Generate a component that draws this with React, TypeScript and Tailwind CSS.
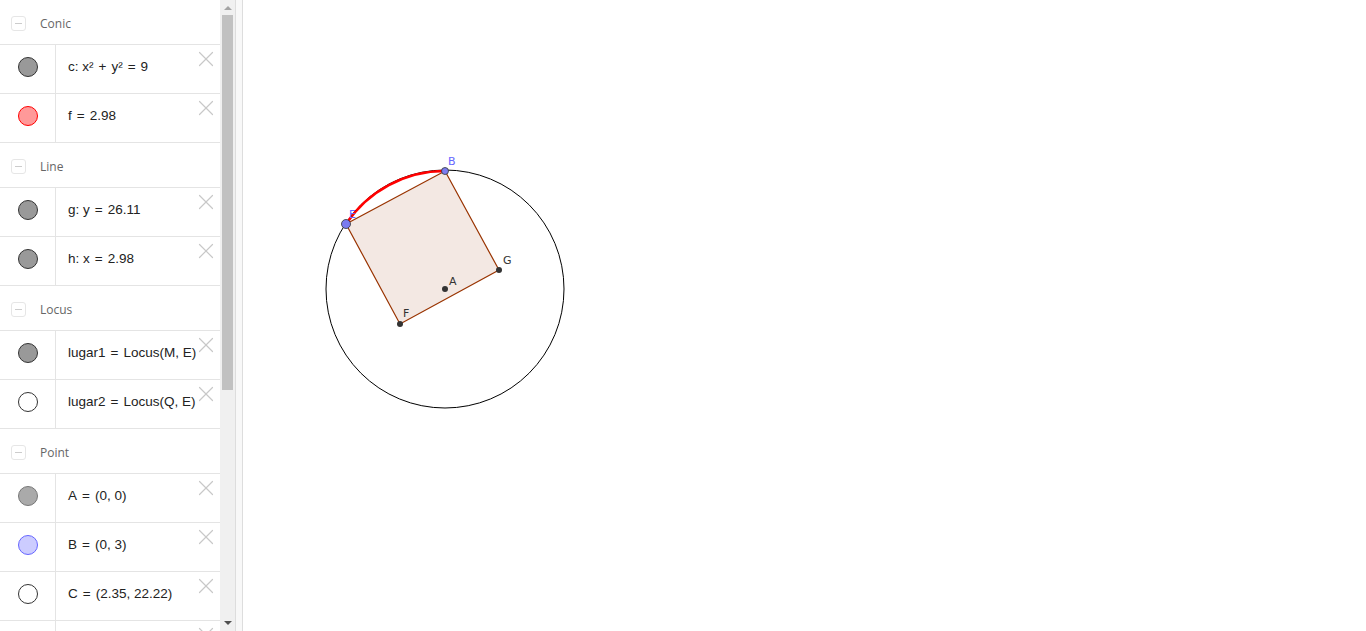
import { X } from "lucide-react";

type Item = { dot: string; ring: string; text: string };
type Group = { title: string; items: Item[] };

const groups: Group[] = [
  {
    title: "Conic",
    items: [
      { dot: "bg-[#999999]", ring: "border-[#333333]", text: "c: x² + y² = 9" },
      { dot: "bg-[#ff9999]", ring: "border-[#ff0000]", text: "f = 2.98" },
    ],
  },
  {
    title: "Line",
    items: [
      { dot: "bg-[#999999]", ring: "border-[#333333]", text: "g: y = 26.11" },
      { dot: "bg-[#999999]", ring: "border-[#333333]", text: "h: x = 2.98" },
    ],
  },
  {
    title: "Locus",
    items: [
      { dot: "bg-[#999999]", ring: "border-[#333333]", text: "lugar1 = Locus(M, E)" },
      { dot: "bg-white", ring: "border-[#333333]", text: "lugar2 = Locus(Q, E)" },
    ],
  },
  {
    title: "Point",
    items: [
      { dot: "bg-[#aaaaaa]", ring: "border-[#777777]", text: "A = (0, 0)" },
      { dot: "bg-[#ccccff]", ring: "border-[#6666ff]", text: "B = (0, 3)" },
      { dot: "bg-white", ring: "border-[#333333]", text: "C = (2.35, 22.22)" },
      { dot: "bg-white", ring: "border-[#333333]", text: "" },
    ],
  },
];

// operators get a bit more room, like the math renderer does
function MathText({ text }: { text: string }) {
  const parts = text.split(/ ([=+]) /);
  return (
    <>
      {parts.map((part, i) =>
        i % 2 === 1 ? (
          <span key={i} className="mx-[5px]">
            {part}
          </span>
        ) : (
          <span key={i}>{part}</span>
        )
      )}
    </>
  );
}

function Header({ title }: { title: string }) {
  return (
    <div className="h-[45px] shrink-0 flex items-center border-b border-[#e4e4e4] pt-[3px]">
      <div className="ml-[11px] w-[15px] h-[15px] rounded-[3px] border border-[#e6e6e6] flex items-center justify-center">
        <div className="w-[7px] h-[1px] bg-[#cccccc]" />
      </div>
      <span className="ml-[14px] text-[12px] text-[#666666] font-['Open_Sans',sans-serif]">
        {title}
      </span>
    </div>
  );
}

function Row({ item }: { item: Item }) {
  return (
    <div className="h-[49px] shrink-0 flex border-b border-[#e4e4e4] relative">
      <div className="w-[56px] shrink-0 flex items-center justify-center border-r border-[#e4e4e4] pb-[4px]">
        <div className={`w-[20px] h-[20px] rounded-full border ${item.dot} ${item.ring}`} />
      </div>
      <div className="flex-1 flex items-center pl-[12px] pb-[4px] text-[13.5px] text-[#222222] font-['Liberation_Sans',sans-serif] whitespace-nowrap">
        <MathText text={item.text} />
      </div>
      <X
        className="absolute right-[1px] top-[1px] text-[#c8c8c8]"
        size={26}
        strokeWidth={1.1}
      />
    </div>
  );
}

function Canvas() {
  const cx = 445;
  const cy = 289;
  const r = 119;
  const ox = 243;
  const p = (x: number, y: number) => `${x - ox},${y}`;
  return (
    <svg className="w-full h-full" viewBox={`0 0 ${1366 - ox} 631`}>
      <circle cx={cx - ox} cy={cy} r={r} fill="none" stroke="#000" strokeWidth={1} />
      <polygon
        points={[p(445, 171), p(499, 270), p(400, 324), p(346, 224)].join(" ")}
        fill="#f3e8e3"
        stroke="#993300"
        strokeWidth={1.2}
      />
      <path
        d={`M ${346 - ox} 224 A ${r} ${r} 0 0 1 ${445 - ox} 171`}
        fill="none"
        stroke="#ff0000"
        strokeWidth={2.4}
      />
      <circle cx={499 - ox} cy={270} r={3} fill="#333" />
      <circle cx={400 - ox} cy={324} r={3} fill="#333" />
      <circle cx={445 - ox} cy={289} r={3} fill="#333" />
      <circle cx={445 - ox} cy={171} r={3.5} fill="#7b7bf0" stroke="#333" strokeWidth={0.8} />
      <circle cx={346 - ox} cy={224} r={4.5} fill="#7b7bf0" stroke="#333" strokeWidth={0.8} />
      <g fontFamily="'DejaVu Sans', sans-serif" fontSize={11}>
        <text x={448 - ox} y={165} fill="#6666ff">B</text>
        <text x={349 - ox} y={218} fill="#6666ff">E</text>
        <text x={503 - ox} y={264} fill="#333">G</text>
        <text x={449 - ox} y={285} fill="#333">A</text>
        <text x={403 - ox} y={317} fill="#333">F</text>
      </g>
    </svg>
  );
}

export default function App() {
  return (
    <div className="w-[1366px] h-[631px] flex bg-white overflow-hidden">
      <div className="w-[220px] shrink-0 h-full overflow-hidden flex flex-col">
        {groups.map((g) => (
          <div key={g.title} className="flex flex-col">
            <Header title={g.title} />
            {g.items.map((it, i) => (
              <Row key={i} item={it} />
            ))}
          </div>
        ))}
      </div>
      {/* scrollbar */}
      <div className="w-[15px] shrink-0 h-full bg-[#f0f0f0] flex flex-col items-center">
        <div className="h-[15px] flex items-center justify-center">
          <div className="w-0 h-0 border-l-[4px] border-r-[4px] border-b-[4px] border-l-transparent border-r-transparent border-b-[#a3a3a3]" />
        </div>
        <div className="w-[11px] h-[375px] bg-[#c1c1c1]" />
        <div className="flex-1" />
        <div className="h-[17px] flex items-center justify-center">
          <div className="w-0 h-0 border-l-[4px] border-r-[4px] border-t-[4px] border-l-transparent border-r-transparent border-t-[#505050]" />
        </div>
      </div>
      <div className="w-[8px] shrink-0 h-full bg-[#f8f8f8] border-l border-r border-[#dddddd]" />
      <div className="flex-1 h-full">
        <Canvas />
      </div>
    </div>
  );
}
